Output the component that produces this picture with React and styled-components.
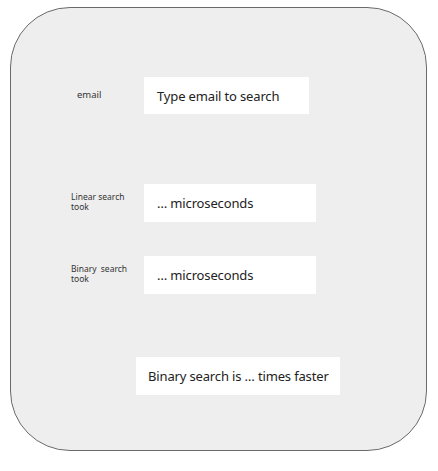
import styled, { createGlobalStyle } from 'styled-components'

const GlobalStyle = createGlobalStyle`
  body {
    margin: 0;
    background: #ffffff;
    font-family: "Noto Sans", "Open Sans", sans-serif;
    color: #1f1f1f;
  }
`

const Card = styled.main`
  box-sizing: border-box;
  width: 417px;
  height: 444px;
  margin: 7px 0 0 10px;
  background: #eeeeee;
  border: 1px solid #6a6a6a;
  border-radius: 60px;
  display: flex;
  flex-direction: column;
  padding-top: 69px;
`

const Row = styled.div`
  display: grid;
  grid-template-columns: 73px auto;
  align-items: center;
  margin-top: ${({ $gap }) => $gap || 0}px;
  padding-left: 60px;
`

const Label = styled.label`
  font-size: ${({ $size }) => $size || 8.5}px;
  line-height: 10px;
  color: #333;
  padding-left: ${({ $indent }) => $indent || 0}px;
  padding-bottom: 2px;
  word-spacing: ${({ $wide }) => ($wide ? 2 : 0)}px;
`

const Field = styled.div`
  box-sizing: border-box;
  width: ${({ $width }) => $width}px;
  height: ${({ $height }) => $height || 38}px;
  background: #ffffff;
  display: flex;
  align-items: center;
  padding-left: 13px;
  font-size: 13px;
  letter-spacing: -0.15px;
  color: #222;
`

const Result = styled(Field)`
  margin: 63px 0 0 125px;
  padding-left: 12px;
`

export default function App () {
  return (
    <>
      <GlobalStyle />
      <Card>
        <Row>
          <Label $size={9.5} $indent={6}>email</Label>
          <Field $width={165} $height={37}>Type email to search</Field>
        </Row>
        <Row $gap={70}>
          <Label>Linear search<br />took</Label>
          <Field $width={172}>… microseconds</Field>
        </Row>
        <Row $gap={34}>
          <Label $wide>Binary search<br />took</Label>
          <Field $width={172}>… microseconds</Field>
        </Row>
        <Result $width={204}>Binary search is … times faster</Result>
      </Card>
    </>
  )
}
